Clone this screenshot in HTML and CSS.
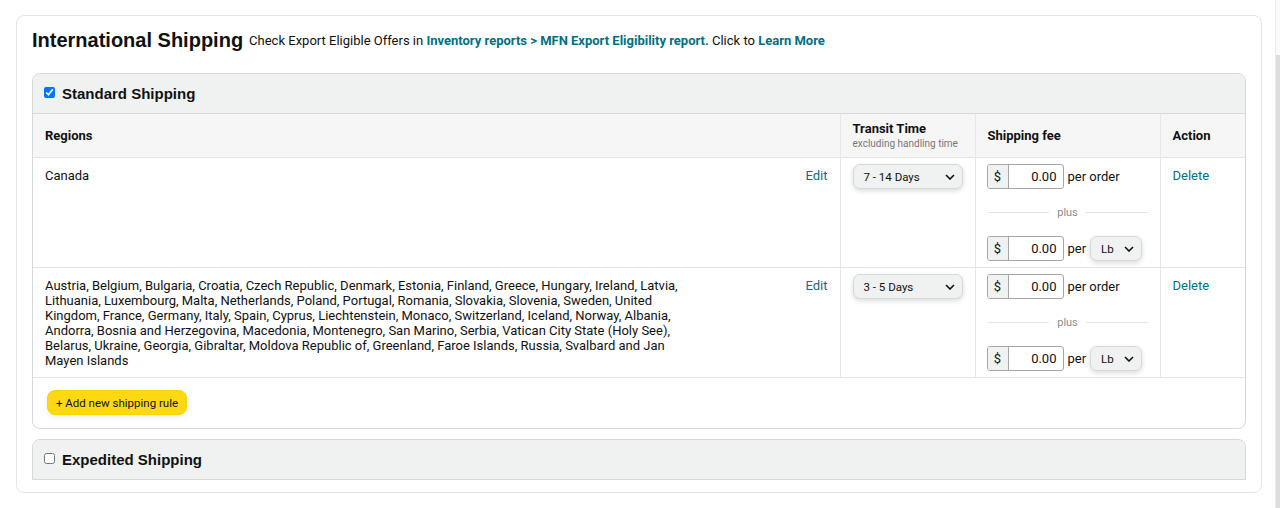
FILE: index.html
```html
<!DOCTYPE html>
<html lang="en">
<head>
    <meta charset="UTF-8">
    <title>International Shipping</title>
    <link rel="stylesheet" href="styles.css">
</head>
<body>
    <div class="card">
        <div class="card-title">
            <h1>International Shipping</h1>
            <p class="hint">Check Export Eligible Offers in <a href="#">Inventory reports &gt; MFN Export Eligibility report.</a> Click to <a href="#">Learn More</a></p>
        </div>

        <div class="method">
            <label class="method-head"><input type="checkbox" checked> <span>Standard Shipping</span></label>
            <table class="rules">
                <colgroup>
                    <col class="col-region">
                    <col class="col-transit">
                    <col class="col-fee">
                    <col>
                </colgroup>
                <thead>
                    <tr>
                        <th>Regions</th>
                        <th>Transit Time<small>excluding handling time</small></th>
                        <th>Shipping fee</th>
                        <th>Action</th>
                    </tr>
                </thead>
                <tbody>
                    <tr>
                        <td class="region-cell">
                            <div class="region">
                                <span class="region-list">Canada</span>
                                <a href="#">Edit</a>
                            </div>
                        </td>
                        <td>
                            <div class="select select-days">7 - 14 Days <svg width="10" height="6" viewBox="0 0 10 6"><polyline points="1,1 5,5 9,1" fill="none" stroke="#0f1111" stroke-width="1.6"/></svg></div>
                        </td>
                        <td>
                            <div class="fee-line">
                                <span class="money"><span class="cur">$</span><span class="amount">0.00</span></span>
                                <span>per order</span>
                            </div>
                            <div class="plus"><span>plus</span></div>
                            <div class="fee-line">
                                <span class="money"><span class="cur">$</span><span class="amount">0.00</span></span>
                                <span>per</span>
                                <div class="select select-unit">Lb <svg width="10" height="6" viewBox="0 0 10 6"><polyline points="1,1 5,5 9,1" fill="none" stroke="#0f1111" stroke-width="1.6"/></svg></div>
                            </div>
                        </td>
                        <td class="action-cell"><a href="#">Delete</a></td>
                    </tr>
                    <tr>
                        <td class="region-cell">
                            <div class="region">
                                <span class="region-list">Austria, Belgium, Bulgaria, Croatia, Czech Republic, Denmark, Estonia, Finland, Greece, Hungary, Ireland, Latvia, Lithuania, Luxembourg, Malta, Netherlands, Poland, Portugal, Romania, Slovakia, Slovenia, Sweden, United Kingdom, France, Germany, Italy, Spain, Cyprus, Liechtenstein, Monaco, Switzerland, Iceland, Norway, Albania, Andorra, Bosnia and Herzegovina, Macedonia, Montenegro, San Marino, Serbia, Vatican City State (Holy See), Belarus, Ukraine, Georgia, Gibraltar, Moldova Republic of, Greenland, Faroe Islands, Russia, Svalbard and Jan Mayen Islands</span>
                                <a href="#">Edit</a>
                            </div>
                        </td>
                        <td>
                            <div class="select select-days">3 - 5 Days <svg width="10" height="6" viewBox="0 0 10 6"><polyline points="1,1 5,5 9,1" fill="none" stroke="#0f1111" stroke-width="1.6"/></svg></div>
                        </td>
                        <td>
                            <div class="fee-line">
                                <span class="money"><span class="cur">$</span><span class="amount">0.00</span></span>
                                <span>per order</span>
                            </div>
                            <div class="plus"><span>plus</span></div>
                            <div class="fee-line">
                                <span class="money"><span class="cur">$</span><span class="amount">0.00</span></span>
                                <span>per</span>
                                <div class="select select-unit">Lb <svg width="10" height="6" viewBox="0 0 10 6"><polyline points="1,1 5,5 9,1" fill="none" stroke="#0f1111" stroke-width="1.6"/></svg></div>
                            </div>
                        </td>
                        <td class="action-cell"><a href="#">Delete</a></td>
                    </tr>
                </tbody>
            </table>
            <div class="method-foot">
                <button class="btn-add">+ Add new shipping rule</button>
            </div>
        </div>

        <div class="method method-closed">
            <label class="method-head"><input type="checkbox"> <span>Expedited Shipping</span></label>
        </div>
    </div>
    <div class="scrollbar"><div class="thumb"></div></div>
</body>
</html>
```

FILE: styles.css
```css
body {
    margin: 0;
    font-family: Roboto, "Liberation Sans", Arial, sans-serif;
    font-size: 13px;
    color: #0f1111;
    background: #fff;
}
a { color: #007185; text-decoration: none; }

.card {
    margin: 15px 18px 16px 16px;
    padding: 12px 15px 12px;
    border: 1px solid #e3e6e6;
    border-radius: 8px;
}
.card-title {
    display: flex;
    align-items: center;
    gap: 6px;
    margin-bottom: 21px;
}
.card-title h1 {
    margin: 0;
    font-family: "Liberation Sans", Arial, sans-serif;
    font-size: 20px;
    line-height: 24px;
    font-weight: bold;
}
.hint { margin: 0; line-height: 15px; }
.hint a { font-weight: bold; }

.method {
    border: 1px solid #d5d9d9;
    border-radius: 8px;
    overflow: hidden;
}
.method-head {
    display: flex;
    align-items: center;
    gap: 7px;
    height: 39px;
    padding-left: 11px;
    background: #f0f2f2;
    border-bottom: 1px solid #d5d9d9;
    font-family: "Liberation Sans", Arial, sans-serif;
    font-size: 15px;
    font-weight: bold;
}
.method-head input {
    width: 11px;
    height: 11px;
    margin: 0 0 2px;
}
.method-closed {
    margin-top: 10px;
    border-radius: 8px 8px 0 0;
}
.method-closed .method-head { border-bottom: 0; }

.rules {
    width: 100%;
    border-collapse: collapse;
    table-layout: fixed;
}
.col-region { width: 807px; }
.col-transit { width: 135px; }
.col-fee { width: 185px; }
.rules th {
    height: 43px;
    padding: 0 12px;
    background: #f6f6f6;
    border-bottom: 1px solid #e3e6e6;
    text-align: left;
    font-weight: bold;
    line-height: 15px;
}
.rules th + th, .rules td + td { border-left: 1px solid #e7e7e7; }
.rules th small {
    display: block;
    margin-top: 1px;
    font-size: 10px;
    font-weight: normal;
    color: #767676;
    line-height: 13px;
}
.rules td {
    padding: 6px 12px;
    vertical-align: top;
    border-bottom: 1px solid #e3e6e6;
    line-height: 15px;
}
.rules td.region-cell, .rules td.action-cell { padding-top: 10px; }

.region {
    display: flex;
    justify-content: space-between;
    align-items: flex-start;
}
.region-list { width: 640px; }

.select {
    display: flex;
    align-items: center;
    justify-content: space-between;
    box-sizing: border-box;
    height: 25px;
    padding: 1px 7px 0 10px;
    background: #f0f2f2;
    border: 1px solid #d5d9d9;
    border-radius: 7px;
    box-shadow: 0 2px 5px rgba(15, 17, 17, 0.15);
    font-size: 11.5px;
}
.select-days { width: 110px; }
.select-unit { width: 52px; }

.fee-line {
    display: flex;
    align-items: center;
    gap: 4px;
    height: 25px;
}
.money {
    display: flex;
    height: 25px;
    box-sizing: border-box;
    margin-left: -1px;
    border: 1px solid #a6a6a6;
    border-radius: 3px;
    overflow: hidden;
}
.cur {
    width: 20px;
    text-align: center;
    line-height: 23px;
    background: #f0f2f2;
    border-right: 1px solid #a6a6a6;
}
.amount {
    width: 54px;
    padding-right: 6px;
    box-sizing: border-box;
    text-align: right;
    line-height: 23px;
}
.plus {
    display: flex;
    align-items: center;
    gap: 8px;
    height: 47px;
    font-size: 11px;
    color: #8a8d8d;
}
.plus::before, .plus::after {
    content: "";
    flex: 1;
    border-top: 1px solid #e3e6e6;
}

.method-foot { padding: 12px 14px 13px; }
.btn-add {
    width: 140px;
    height: 25px;
    padding: 0;
    background: #ffd814;
    border: 1px solid #fcd200;
    border-radius: 8px;
    box-shadow: 0 2px 5px rgba(213, 217, 217, 0.5);
    font-family: inherit;
    font-size: 11.5px;
    color: #0f1111;
}

.scrollbar {
    position: fixed;
    top: 0;
    right: 0;
    bottom: 0;
    width: 4px;
    border-left: 1px solid #ececec;
    background: #fafafa;
}
.scrollbar .thumb {
    margin-top: 55px;
    height: 453px;
    background: #dcdcdc;
}
```
